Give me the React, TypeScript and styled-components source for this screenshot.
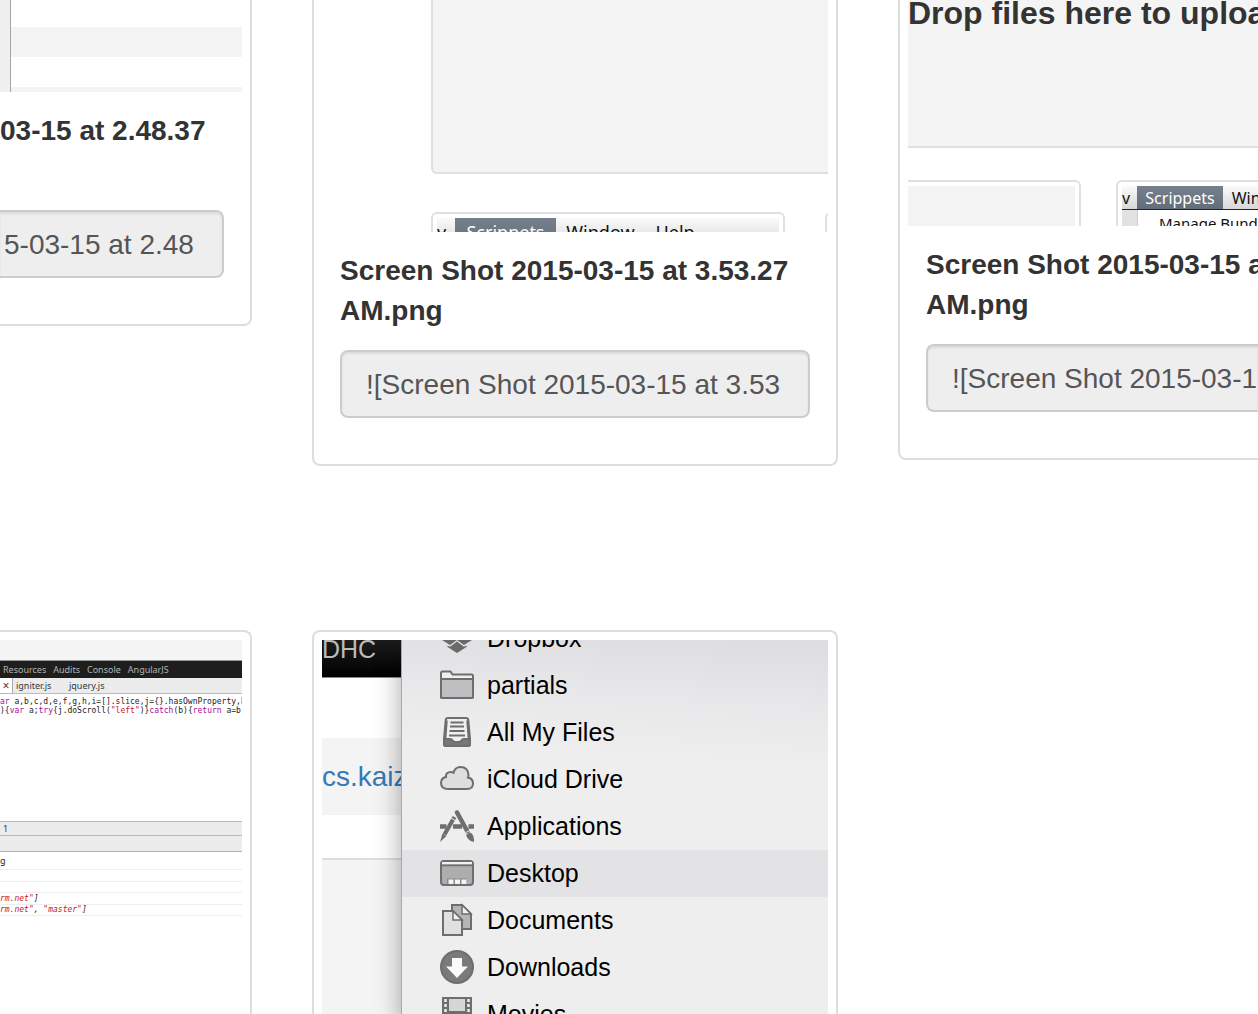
import React from "react";
import styled, { createGlobalStyle } from "styled-components";

const GlobalStyle = createGlobalStyle`
  *, *::before, *::after { box-sizing: border-box; }
  body { margin: 0; background: #fff; color: #333; font-family: "Helvetica Neue", "Liberation Sans", Arial, sans-serif; }
`;

const Page = styled.main`
  display: flex;
  flex-direction: column;
  gap: 164px;
  height: 100vh;
  overflow: hidden;
`;

const Row = styled.section<{ $fill?: boolean }>`
  display: grid;
  grid-template-columns: minmax(0, 252fr) minmax(0, 526fr) minmax(0, 360fr);
  column-gap: 60px;
  align-items: ${(p) => (p.$fill ? "stretch" : "start")};
  flex: ${(p) => (p.$fill ? "1 1 0" : "0 0 auto")};
  min-height: 0;
`;

type Open = "left" | "right" | "none";

const Card = styled.article<{ $open?: Open; $edge: "top" | "bottom" }>`
  display: flex;
  flex-direction: column;
  min-width: 0;
  min-height: 0;
  overflow: hidden;
  border: 2px solid #ddd;
  border-radius: 8px;
  padding: 8px;
  ${(p) => p.$open === "left" && "border-left: 0; padding-left: 0; border-top-left-radius: 0; border-bottom-left-radius: 0;"}
  ${(p) => p.$open === "right" && "border-right: 0; padding-right: 0; border-top-right-radius: 0; border-bottom-right-radius: 0;"}
  ${(p) =>
    p.$edge === "top"
      ? "border-top: 0; padding-top: 0; border-top-left-radius: 0; border-top-right-radius: 0;"
      : "border-bottom: 0; padding-bottom: 0; border-bottom-left-radius: 0; border-bottom-right-radius: 0;"}
`;

const Caption = styled.div<{ $open?: Open }>`
  display: flex;
  flex-direction: column;
  gap: 19px;
  padding: 19px 18px 38px;
  ${(p) => p.$open === "left" && "padding-left: 0;"}
  ${(p) => p.$open === "right" && "padding-right: 0;"}
`;

const Title = styled.label`
  display: block;
  min-height: 80px;
  font-size: 28px;
  line-height: 40px;
  font-weight: 700;
  white-space: pre;
  overflow: hidden;
`;

const Field = styled.input<{ $open?: Open }>`
  display: block;
  width: 100%;
  height: 68px;
  margin: 0;
  padding: 2px 24px 0;
  border: 2px solid #ccc;
  border-radius: 8px;
  background: #eee;
  color: #555;
  font: inherit;
  font-size: 28px;
  box-shadow: inset 0 2px 2px rgba(0, 0, 0, 0.075);
  ${(p) => p.$open === "left" && "border-left: 0; padding-left: 4px; border-top-left-radius: 0; border-bottom-left-radius: 0;"}
  ${(p) => p.$open === "right" && "border-right: 0; padding-right: 0; border-top-right-radius: 0; border-bottom-right-radius: 0;"}
`;

/* Window with striped rows */
const StripedShot = styled.div`
  display: flex;
  height: 92px;
`;
const StripedEdge = styled.div`
  width: 11px;
  background: #f1eff0;
  border-right: 1px solid #a5a5a5;
`;
const Stripes = styled.div`
  flex: 1;
  display: flex;
  flex-direction: column;
  overflow: hidden;
`;
const Stripe = styled.div<{ $h: number; $dark?: boolean }>`
  flex: 0 0 ${(p) => p.$h}px;
  background: ${(p) => (p.$dark ? "#f4f4f4" : "#fff")};
`;

/* Upload page */
const UploadShot = styled.div<{ $inset: number; $h: number; $gap: number }>`
  display: flex;
  flex-direction: column;
  gap: ${(p) => p.$gap}px;
  height: ${(p) => p.$h}px;
  padding-left: ${(p) => p.$inset}px;
  overflow: hidden;
`;
const DropZone = styled.div<{ $h: number; $rounded?: boolean }>`
  flex: 0 0 ${(p) => p.$h}px;
  background: #f4f4f4;
  border-bottom: 2px solid #e0e0e0;
  ${(p) => p.$rounded && "border-left: 2px solid #e0e0e0; border-bottom-left-radius: 6px;"}
  font-size: 32px;
  line-height: 27px;
  font-weight: 700;
  white-space: nowrap;
  overflow: hidden;
`;
const Thumbs = styled.div<{ $gap: number }>`
  display: flex;
  gap: ${(p) => p.$gap}px;
  flex: 1;
  min-height: 0;
`;
const Thumb = styled.div<{ $w: number; $open?: boolean }>`
  flex: 0 0 ${(p) => p.$w}px;
  border: 2px solid #e0e0e0;
  border-bottom: 0;
  border-radius: 6px 6px 0 0;
  padding: 4px 4px 0;
  overflow: hidden;
  ${(p) => p.$open && "border-left: 0; padding-left: 0; border-top-left-radius: 0;"}
`;
const ThumbFill = styled.div`
  height: 100%;
  background: #f4f4f4;
`;
const MenuBar = styled.div<{ $size: number; $h: number; $line?: boolean }>`
  display: flex;
  height: ${(p) => p.$h}px;
  font-family: "Lucida Grande", "Noto Sans", sans-serif;
  font-size: ${(p) => p.$size}px;
  line-height: ${(p) => p.$h}px;
  color: #111;
  white-space: nowrap;
  background: linear-gradient(#fafafa, #d8d8d8);
  border-bottom: ${(p) => (p.$line ? "1px solid #222" : "0")};
`;
const MenuItem = styled.span<{ $w: number; $active?: boolean; $center?: boolean }>`
  flex: 0 0 ${(p) => p.$w}px;
  text-align: ${(p) => (p.$center ? "center" : "left")};
  overflow: hidden;
  ${(p) => p.$active && "background: linear-gradient(#76808c, #646e7a); color: #fff;"}
`;
const SubMenu = styled.div`
  margin-left: 15px;
  padding-left: 21px;
  border-left: 1px solid #ccc;
  box-shadow: -15px 0 0 #e2e2e2;
  height: 26px;
  font-family: "Lucida Grande", "Noto Sans", sans-serif;
  font-size: 15px;
  line-height: 26px;
  color: #111;
  white-space: nowrap;
`;

/* Developer tools */
const DevShot = styled.div`
  display: flex;
  flex-direction: column;
  flex: 1;
  overflow: hidden;
  background: #fff;
  font-family: "Lucida Grande", "Noto Sans", sans-serif;
  font-size: 9px;
  line-height: 17px;
  white-space: pre;
`;
const DevSpace = styled.div<{ $h: number; $grey?: boolean }>`
  flex: 0 0 ${(p) => p.$h}px;
  background: ${(p) => (p.$grey ? "#f4f4f4" : "#fff")};
`;
const DevTabs = styled.nav`
  display: flex;
  gap: 7px;
  flex: 0 0 18px;
  padding-left: 3px;
  background: #1e1e1e;
  color: #b4b4b4;
  border-top: 1px solid #999;
`;
const FileTabs = styled.div`
  display: flex;
  flex: 0 0 16px;
  line-height: 15px;
  background: #ececec;
  color: #303942;
  border-bottom: 1px solid #bbb;
`;
const CloseTab = styled.button`
  width: 13px;
  padding: 0;
  border: 0;
  border-right: 1px solid #aaa;
  background: #fff;
  color: #444;
  font: inherit;
  font-size: 12px;
`;
const FileTab = styled.span`
  width: 53px;
  padding-left: 3px;
`;
const Code = styled.code<{ $italic?: boolean; $h: number }>`
  display: block;
  flex: 0 0 ${(p) => p.$h}px;
  font-family: "DejaVu Sans Mono", monospace;
  font-size: 8px;
  line-height: ${(p) => p.$h - (p.$italic ? 1 : 0)}px;
  font-style: ${(p) => (p.$italic ? "italic" : "normal")};
  border-bottom: ${(p) => (p.$italic ? "1px solid #eee" : "0")};
  color: #222;
`;
const Keyword = styled.span`color: #aa0d91;`;
const Literal = styled.span`color: #c8201c;`;
const StatusBar = styled.div<{ $h: number }>`
  flex: 0 0 ${(p) => p.$h}px;
  padding-left: 3px;
  background: #ececec;
  border-top: 1px solid #b8b8b8;
  line-height: ${(p) => p.$h - 1}px;
  color: #303942;
`;
const ConsoleLine = styled.div<{ $h: number; $first?: boolean }>`
  flex: 0 0 ${(p) => p.$h}px;
  border-top: ${(p) => (p.$first ? "1px solid #b0b0b0" : "0")};
  border-bottom: 1px solid #eee;
  line-height: ${(p) => p.$h - 2}px;
  color: #222;
`;

/* File browser over a web page */
const FinderShot = styled.div`
  display: flex;
  flex: 1;
  min-height: 0;
  overflow: hidden;
`;
const Behind = styled.div`
  flex: 0 0 79px;
  display: flex;
  flex-direction: column;
  overflow: hidden;
  white-space: nowrap;
  background: #f4f4f4;
`;
const BlackBar = styled.div`
  flex: 0 0 38px;
  background: linear-gradient(#1c1c1c, #000);
  color: #bbb;
  font-size: 25px;
  line-height: 18px;
  border-bottom: 1px solid #888;
`;
const Band = styled.div<{ $h: number; $grey?: boolean; $line?: boolean }>`
  flex: 0 0 ${(p) => p.$h}px;
  display: flex;
  align-items: center;
  background: ${(p) => (p.$grey ? "#f4f4f4" : "#fff")};
  border-bottom: ${(p) => (p.$line ? "2px solid #ddd" : "0")};
`;
const SiteLink = styled.a`
  color: #337ab7;
  font-size: 28px;
  text-decoration: none;
`;
const Sidebar = styled.div`
  flex: 1;
  position: relative;
  border-left: 1px solid #aaa;
  background: linear-gradient(184deg, #dedee0 10px, #e8e8ea 70px, #eee 130px);
  box-shadow: 0 12px 24px rgba(0, 0, 0, 0.35);
`;
const Places = styled.ul`
  list-style: none;
  margin: -25px 0 0;
  padding: 0;
`;
const Place = styled.li<{ $active?: boolean }>`
  display: flex;
  align-items: center;
  gap: 13px;
  height: 47px;
  padding-left: 38px;
  font-size: 25px;
  line-height: 47px;
  color: #000;
  background: ${(p) => (p.$active ? "#e3e3e5" : "transparent")};
`;
const Glyph = styled.svg`
  flex: 0 0 34px;
  width: 34px;
  height: 35px;
  stroke: #6e6e6e;
  stroke-width: 2;
  fill: #dcdcdc;
`;

const icons: Record<string, React.ReactNode> = {
  Dropbox: (
    <g fill="#6a6a6a" stroke="none">
      <path d="M3 8 10 3l7 5-7 5zM31 8l-7-5-7 5 7 5zM2 19l8-6 7 5.500 7-5.500 8 6-8 5-7-5-7 5z" />
      <path d="M7.500 24.500l2.500 1.200 7-5.200 7 5.200 2.500-1.200v1.500l-9.500 6-9.500-6z" />
    </g>
  ),
  partials: (
    <>
      <path d="M1 30V5q0-1.500 1.500-1.500h8l2 3H31.500Q33 6.500 33 8V28.500Q33 30 31.500 30H2.500Q1 30 1 28.500z" fill="#efefef" />
      <path d="M1 11h32v17.500Q33 30 31.500 30h-29Q1 30 1 28.500z" fill="#bfbfc1" />
    </>
  ),
  "All My Files": (
    <>
      <path d="M8 3h18q2 0 2.300 2L30 24v5q0 2-2 2H6q-2 0-2-2v-5L5.700 5Q6 3 8 3z" fill="#f0f0f0" />
      <path d="M10.500 7.500h13M10 11.500h14M9.500 16h15M9 20.500h16" strokeWidth="1.800" />
      <path d="M4 24h6q2 0 2.500 1.500 1 1.500 3 1.500h3q2 0 3-1.500Q22 24 24 24h6v5q0 2-2 2H6q-2 0-2-2z" fill="#777" />
      <path d="M6.500 5.500 5 25M27.500 5.500 29 25" strokeWidth="2.500" />
    </>
  ),
  "iCloud Drive": (
    <path d="M8 27q-7 0-7-6 0-5 5-6-.5-5 5-5 1.500 0 2.500.8Q15 5 20.500 5q7.500 0 8 8 0 1.500-.5 2.500 5 1 5 6 0 5.500-6 5.500z" fill="#dedede" />
  ),
  Applications: (
    <g>
      <path d="M0 17.500h6.500M13 17.500h9M28.500 17.500H34" strokeWidth="4.500" />
      <path d="M14.500 8 4.500 25.500" strokeWidth="4.200" />
      <path d="M17 3.500l10.500 19" strokeWidth="4.500" strokeLinecap="round" />
      <path d="M2.500 24.500l4 2.500L0 33z" fill="#6e6e6e" stroke="none" />
      <path d="M26 26l4.500-2.500q4 3 3.500 9.500-6-1-8-7z" fill="#6e6e6e" stroke="none" />
      <path d="M11 9l5 3M26 23.500l4-2.200" stroke="#eee" strokeWidth="1" />
    </g>
  ),
  Desktop: (
    <>
      <rect x="1" y="5" width="32" height="24" rx="3" fill="#adadad" />
      <path d="M2 7h30" stroke="#f1f1f1" />
      <path d="M2 9.500h30" strokeWidth="1.500" />
      <path d="M7 22.500h20V28H7z" fill="#8a8a8a" stroke="none" />
      <path d="M8.500 23.500h5V28h-5zM15 23.500h5V28h-5zM21.500 23.500h5V28h-5z" fill="#f4f4f4" stroke="none" />
    </>
  ),
  Documents: (
    <>
      <path d="M12 2h10l9 9v15H12z" fill="#b5b5b5" />
      <path d="M22 2v9h9z" fill="#f2f2f2" strokeWidth="1.500" />
      <path d="M3 8h10l9 9v15H3z" fill="#e0e0e0" />
      <path d="M13 8v9h9z" fill="#f2f2f2" strokeWidth="1.500" />
    </>
  ),
  Downloads: (
    <>
      <circle cx="17" cy="17" r="16" fill="#7a7a7a" />
      <path d="M12 8h10v8.500h6L17 28 6 16.500h6z" fill="#fafafa" stroke="none" />
    </>
  ),
  Movies: (
    <>
      <rect x="3" y="1" width="28" height="32" fill="#6e6e6e" />
      <path d="M9 2h16v12H9zM9 18h16v12H9z" fill="#d6d6d6" stroke="none" />
      <path d="M5.500 2v30M28.500 2v30" stroke="#eee" strokeWidth="2.500" strokeDasharray="3 2" />
    </>
  ),
};

function Details({ id, title, value, open }: { id: string; title: string; value: string; open?: Open }) {
  return (
    <Caption $open={open}>
      <Title htmlFor={id}>{title}</Title>
      <Field id={id} value={value} readOnly $open={open} />
    </Caption>
  );
}

export default function App() {
  return (
    <>
      <GlobalStyle />
      <Page>
        <Row>
          <Card $open="left" $edge="top">
            <StripedShot>
              <StripedEdge />
              <Stripes>
                <Stripe $h={27} />
                <Stripe $h={30} $dark />
                <Stripe $h={30} />
                <Stripe $h={5} $dark />
              </Stripes>
            </StripedShot>
            <Details id="shot-a" title="03-15 at 2.48.37" value="5-03-15 at 2.48" open="left" />
          </Card>
          <Card $edge="top">
            <UploadShot $inset={109} $h={232} $gap={38}>
              <DropZone $h={174} $rounded />
              <Thumbs $gap={40}>
                <Thumb $w={354}>
                  <MenuBar $size={18} $h={28}>
                    <MenuItem $w={18}>v</MenuItem>
                    <MenuItem $w={101} $active $center>Scrippets</MenuItem>
                    <MenuItem $w={89} $center>Window</MenuItem>
                    <MenuItem $w={60} $center>Help</MenuItem>
                  </MenuBar>
                </Thumb>
                <Thumb $w={354} />
              </Thumbs>
            </UploadShot>
            <Details id="shot-b" title={"Screen Shot 2015-03-15 at 3.53.27\nAM.png"} value="![Screen Shot 2015-03-15 at 3.53" />
          </Card>
          <Card $open="right" $edge="top">
            <UploadShot $inset={0} $h={226} $gap={32}>
              <DropZone $h={148}>Drop files here to upload</DropZone>
              <Thumbs $gap={35}>
                <Thumb $w={173} $open>
                  <ThumbFill />
                </Thumb>
                <Thumb $w={300}>
                  <MenuBar $size={16} $h={24} $line>
                    <MenuItem $w={15}>v</MenuItem>
                    <MenuItem $w={86} $active $center>Scrippets</MenuItem>
                    <MenuItem $w={78} $center>Window</MenuItem>
                  </MenuBar>
                  <SubMenu>Manage Bundles</SubMenu>
                </Thumb>
              </Thumbs>
            </UploadShot>
            <Details id="shot-c" title={"Screen Shot 2015-03-15 at\nAM.png"} value="![Screen Shot 2015-03-15" open="right" />
          </Card>
        </Row>
        <Row $fill>
          <Card $open="left" $edge="bottom">
            <DevShot>
              <DevSpace $h={20} $grey />
              <DevTabs>
                <span>Resources</span>
                <span>Audits</span>
                <span>Console</span>
                <span>AngularJS</span>
              </DevTabs>
              <FileTabs>
                <CloseTab aria-label="Close tab">×</CloseTab>
                <FileTab>igniter.js</FileTab>
                <FileTab>jquery.js</FileTab>
              </FileTabs>
              <DevSpace $h={3} />
              <Code $h={9}>
                <Keyword>ar</Keyword>
                {" a,b,c,d,e,f,g,h,i=[].slice,j={}.hasOwnProperty,k="}
              </Code>
              <Code $h={9}>
                {"){"}
                <Keyword>var</Keyword>
                {" a;"}
                <Keyword>try</Keyword>
                {"{j.doScroll("}
                <Literal>"left"</Literal>
                {")}"}
                <Keyword>catch</Keyword>
                {"(b){"}
                <Keyword>return</Keyword>
                {" a=b,vo"}
              </Code>
              <DevSpace $h={106} />
              <StatusBar $h={14}>1</StatusBar>
              <StatusBar $h={16} />
              <ConsoleLine $h={19} $first>g</ConsoleLine>
              <ConsoleLine $h={12} />
              <ConsoleLine $h={11} />
              <Code $h={12} $italic>
                <Literal>rm.net"</Literal>]
              </Code>
              <Code $h={11} $italic>
                <Literal>rm.net"</Literal>
                {", "}
                <Literal>"master"</Literal>]
              </Code>
            </DevShot>
          </Card>
          <Card $edge="bottom">
            <FinderShot>
              <Behind>
                <BlackBar>DHC</BlackBar>
                <Band $h={60} />
                <Band $h={77} $grey>
                  <SiteLink href="#">cs.kaiz</SiteLink>
                </Band>
                <Band $h={45} $line />
              </Behind>
              <Sidebar>
                <Places>
                  {Object.keys(icons).map((name) => (
                    <Place key={name} $active={name === "Desktop"}>
                      <Glyph viewBox="0 0 34 35" aria-hidden="true">
                        {icons[name]}
                      </Glyph>
                      {name}
                    </Place>
                  ))}
                </Places>
              </Sidebar>
            </FinderShot>
          </Card>
        </Row>
      </Page>
    </>
  );
}
